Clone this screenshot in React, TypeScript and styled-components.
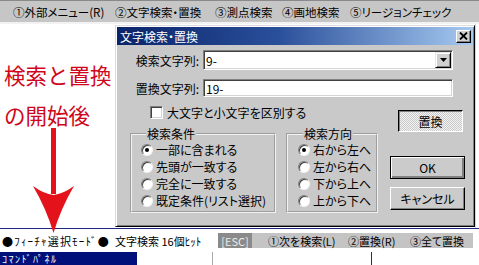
import React from "react";
import styled, { createGlobalStyle } from "styled-components";

const GlobalStyle = createGlobalStyle`
  html, body { margin: 0; padding: 0; background: #fff; }
  * { box-sizing: border-box; }
`;

const FONT = `"Noto Sans CJK JP", "Noto Sans", sans-serif`;

const Screen = styled.div`
  position: relative;
  width: 479px;
  height: 265px;
  overflow: hidden;
  display: flex;
  flex-direction: column;
  background: #fff;
  color: #000;
  font-family: ${FONT};
  font-feature-settings: "palt";
`;

// top menu
const MenuBar = styled.div`
  flex: none;
  height: 24px;
  display: flex;
  align-items: center;
  padding-left: 13px;
  background: #c6c6c6;
  border-top: 1px solid #8a8a8a;
  border-bottom: 2px solid #f2f2f2;
  font-size: 11.5px;
  white-space: nowrap;
`;

const MenuItem = styled.span<{ $w: number }>`
  width: ${(p) => p.$w}px;
  flex: none;
`;

const Main = styled.div`
  flex: none;
  height: 204px;
  display: flex;
`;

const Note = styled.div`
  position: relative;
  flex: none;
  width: 115px;
  padding: 31px 0 0 4px;
`;

const NoteText = styled.div`
  color: #d0061c;
  font-size: 21.5px;
  line-height: 40px;
  font-feature-settings: normal;
  white-space: nowrap;
`;

const Arrow = styled.svg`
  position: absolute;
  left: 30px;
  top: 104px;
  z-index: 2;
  overflow: visible;
`;

const RightEdge = styled.div`
  flex: none;
  width: 4px;
  border-left: 1px solid #d6d6d6;
  background: #fff;
`;

// dialog
const Dialog = styled.div`
  flex: none;
  margin-top: 1px;
  width: 360px;
  height: 202px;
  display: flex;
  flex-direction: column;
  padding: 1px;
  background: #c9c9c9;
  border: 1px solid;
  border-color: #dcdcdc #000 #000 #dcdcdc;
  box-shadow: inset 1px 1px 0 #fff, inset -1px -1px 0 #808080;
  font-size: 12px;
`;

const TitleBar = styled.div`
  flex: none;
  height: 18px;
  display: flex;
  align-items: center;
  justify-content: space-between;
  padding: 0 2px 0 3px;
  background: linear-gradient(90deg, #0a246a 0%, #2a4f9a 45%, #a6caf0 100%);
  color: #fff;
  font-size: 12px;
`;

const CloseBox = styled.div`
  width: 15px;
  height: 13px;
  display: flex;
  align-items: center;
  justify-content: center;
  background: #d0d0d0;
  border: 1px solid;
  border-color: #fff #000 #000 #fff;
  box-shadow: inset -1px -1px 0 #808080;
`;

const Body = styled.div`
  padding-top: 5px;
`;

const FieldRow = styled.div<{ $h: number; $gap?: number }>`
  display: flex;
  align-items: center;
  height: ${(p) => p.$h}px;
  margin-top: ${(p) => p.$gap ?? 0}px;
`;

const FieldLabel = styled.span`
  width: 83px;
  flex: none;
  text-align: right;
  padding-right: 1px;
`;

const Sunken = styled.div`
  position: relative;
  margin-left: 3px;
  width: 250px;
  height: 100%;
  display: flex;
  align-items: center;
  padding-left: 2px;
  background: #fff;
  border: 1px solid;
  border-color: #808080 #fff #fff #808080;
  box-shadow: inset 1px 1px 0 #404040, inset -1px -1px 0 #d4d4d4;
  font-size: 12px;
`;

const DropButton = styled.div`
  position: absolute;
  right: 1px;
  top: 1px;
  width: 16px;
  height: 16px;
  display: flex;
  align-items: center;
  justify-content: center;
  background: #cfcfcf;
  border: 1px solid;
  border-color: #e6e6e6 #000 #000 #e6e6e6;
  box-shadow: inset 1px 1px 0 #fff, inset -1px -1px 0 #808080;
`;

const Lower = styled.div`
  display: flex;
  margin-top: 7px;
`;

const LeftPart = styled.div`
  padding-left: 13px;
`;

const CheckRow = styled.label`
  display: flex;
  align-items: center;
  height: 17px;
  padding-left: 20px;
  gap: 4px;
`;

const CheckBox = styled.span`
  width: 13px;
  height: 13px;
  background: #fff;
  border: 1px solid;
  border-color: #808080 #fff #fff #808080;
  box-shadow: inset 1px 1px 0 #404040, inset -1px -1px 0 #d4d4d4;
`;

const Groups = styled.div`
  display: flex;
  gap: 10px;
  margin-top: 6px;
`;

const Group = styled.fieldset<{ $w: number }>`
  width: ${(p) => p.$w}px;
  margin: 0;
  padding: 0 0 2px ${(p) => (p.$w > 100 ? 9 : 10)}px;
  min-inline-size: 0;
  border: 2px groove #f2f2f2;
`;

const Legend = styled.legend`
  margin-left: 5px;
  padding: 0 1px;
  font-size: 12px;
  line-height: 14px;
`;

const RadioRow = styled.div`
  display: flex;
  align-items: center;
  height: 17px;
  gap: 3px;
  white-space: nowrap;
`;

const Radio = styled.span<{ $on?: boolean }>`
  position: relative;
  flex: none;
  width: 12px;
  height: 12px;
  border-radius: 50%;
  background: #fff;
  border: 1px solid;
  border-color: #808080 #f4f4f4 #f4f4f4 #808080;
  box-shadow: inset 1px 1px 0 #404040;
  &::after {
    content: "";
    display: ${(p) => (p.$on ? "block" : "none")};
    position: absolute;
    left: 3px;
    top: 3px;
    width: 4px;
    height: 4px;
    border-radius: 50%;
    background: #000;
  }
`;

const ButtonCol = styled.div`
  margin-left: 12px;
  display: flex;
  flex-direction: column;
  align-items: flex-start;
`;

const Button = styled.div<{ $kind?: "default"; $top: number }>`
  width: 75px;
  height: 23px;
  margin-top: ${(p) => p.$top}px;
  display: flex;
  align-items: center;
  justify-content: center;
  background: #cbcbcb;
  border: 1px solid;
  border-color: ${(p) => (p.$kind === "default" ? "#000" : "#fff #000 #000 #fff")};
  box-shadow: ${(p) =>
    p.$kind === "default"
      ? "inset 1px 1px 0 #fff, inset -2px -2px 0 #808080"
      : "inset -1px -1px 0 #808080"};
  font-size: 12px;
`;

const ToggleButton = styled(Button)`
  width: 65px;
  height: 22px;
  margin-left: 8px;
  border-color: #000 #fff #fff #000;
  box-shadow: inset 1px 1px 0 #808080;
  background: repeating-conic-gradient(#f4f4f4 0 25%, #c8c8c8 0 50%) 0 0 / 2px 2px;
`;

// status line
const StatusBar = styled.div`
  flex: none;
  height: 24px;
  display: flex;
  align-items: center;
  padding-left: 2px;
  border-top: 1px solid #202a80;
  background: #fff;
  font-size: 11px;
  white-space: nowrap;
`;

const StatusText = styled.span<{ $w: number; $spread?: boolean }>`
  width: ${(p) => p.$w}px;
  flex: none;
  letter-spacing: ${(p) => (p.$spread ? "1.2px" : "0")};
`;

const EscTag = styled.span`
  width: 34px;
  height: 15px;
  display: flex;
  align-items: center;
  justify-content: center;
  background: #8a8a8a;
  color: #ececec;
`;

const KeyStrip = styled.div`
  width: 221px;
  height: 15px;
  display: flex;
  align-items: center;
  padding-left: 16px;
  background: #c4c4c4;
`;

const BottomPanel = styled.div`
  flex: none;
  height: 13px;
  display: flex;
  font-size: 10px;
`;

const PanelTitle = styled.div`
  width: 137px;
  padding: 1px 0 0 2px;
  background: #00107a;
  color: #fff;
  line-height: 12px;
  letter-spacing: 1.5px;
  white-space: nowrap;
`;

const PanelCell = styled.div<{ $w: number; $line: string }>`
  width: ${(p) => p.$w}px;
  border-right: 1px solid ${(p) => p.$line};
`;

const menus: [string, number][] = [
  ["①外部メニュー(R)", 102],
  ["②文字検索・置換", 100],
  ["③測点検索", 67],
  ["④画地検索", 68],
  ["⑤リージョンチェック", 110],
];

const conditions = ["一部に含まれる", "先頭が一致する", "完全に一致する", "既定条件(リスト選択)"];
const directions = ["右から左へ", "左から右へ", "下から上へ", "上から下へ"];

export default function App() {
  return (
    <>
      <GlobalStyle />
      <Screen>
        <MenuBar>
          {menus.map(([t, w]) => (
            <MenuItem key={t} $w={w}>
              {t}
            </MenuItem>
          ))}
        </MenuBar>

        <Main>
          <Note>
            <NoteText>
              検索と置換
              <br />
              の開始後
            </NoteText>
            <Arrow width="50" height="110" viewBox="0 0 50 110">
              <rect x="21" y="0" width="5" height="66" fill="#e3121b" />
              <path d="M3 58 Q14 66 23.5 67 Q33 66 44 58 Q31 80 23.5 105 Q16 80 3 58 Z" fill="#e3121b" />
            </Arrow>
          </Note>

          <Dialog>
            <TitleBar>
              <span>文字検索・置換</span>
              <CloseBox>
                <svg width="9" height="8" viewBox="0 0 9 8">
                  <path d="M1 0.5 L8 7.5 M8 0.5 L1 7.5" stroke="#000" strokeWidth="1.8" />
                </svg>
              </CloseBox>
            </TitleBar>
            <Body>
              <FieldRow $h={20}>
                <FieldLabel>検索文字列:</FieldLabel>
                <Sunken>
                  9-
                  <DropButton>
                    <svg width="7" height="4" viewBox="0 0 7 4">
                      <path d="M0 0 H7 L3.5 4 Z" fill="#000" />
                    </svg>
                  </DropButton>
                </Sunken>
              </FieldRow>
              <FieldRow $h={18} $gap={9}>
                <FieldLabel>置換文字列:</FieldLabel>
                <Sunken>19-</Sunken>
              </FieldRow>

              <Lower>
                <LeftPart>
                  <CheckRow>
                    <CheckBox />
                    大文字と小文字を区別する
                  </CheckRow>
                  <Groups>
                    <Group $w={146}>
                      <Legend>検索条件</Legend>
                      {conditions.map((c, i) => (
                        <RadioRow key={c}>
                          <Radio $on={i === 0} />
                          {c}
                        </RadioRow>
                      ))}
                    </Group>
                    <Group $w={92}>
                      <Legend>検索方向</Legend>
                      {directions.map((d, i) => (
                        <RadioRow key={d}>
                          <Radio $on={i === 0} />
                          {d}
                        </RadioRow>
                      ))}
                    </Group>
                  </Groups>
                </LeftPart>
                <ButtonCol>
                  <ToggleButton $top={6}>置換</ToggleButton>
                  <Button $kind="default" $top={24}>
                    OK
                  </Button>
                  <Button $top={8}>キャンセル</Button>
                </ButtonCol>
              </Lower>
            </Body>
          </Dialog>
          <RightEdge />
        </Main>

        <StatusBar>
          <StatusText $w={113} $spread>
            ●ﾌｨｰﾁｬ選択ﾓｰﾄﾞ●
          </StatusText>
          <StatusText $w={103}>文字検索 16個ﾋｯﾄ</StatusText>
          <EscTag>[ESC]</EscTag>
          <KeyStrip>
            <StatusText $w={80}>①次を検索(L)</StatusText>
            <StatusText $w={62}>②置換(R)</StatusText>
            <StatusText $w={60}>③全て置換</StatusText>
          </KeyStrip>
        </StatusBar>

        <BottomPanel>
          <PanelTitle>ｺﾏﾝﾄﾞﾊﾟﾈﾙ</PanelTitle>
          <PanelCell $w={76} $line="#a8a8a8" />
          <PanelCell $w={159} $line="#1a2a8a" />
        </BottomPanel>
      </Screen>
    </>
  );
}
